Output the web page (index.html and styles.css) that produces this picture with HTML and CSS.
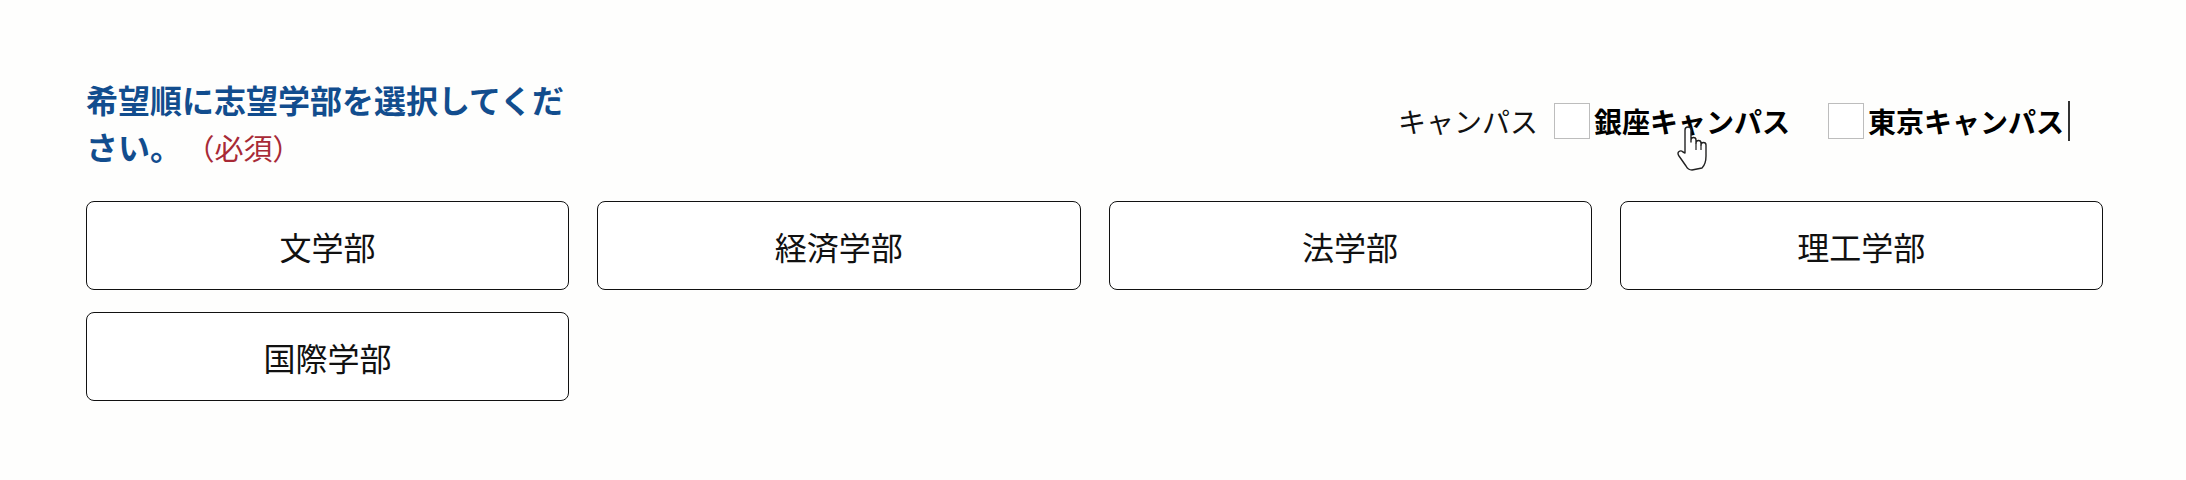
FILE: index.html
```html
<!doctype html>
<html lang="ja">

<head>
    <meta charset="UTF-8">
    <title>志望学部選択</title>

    <!-- CSS -->
    <link rel="stylesheet" href="styles.css">

</head>

<body>
    <div class="page">
        <div class="head">
            <p class="lead">希望順に志望学部を選択してください。<span class="req">（必須）</span></p>

            <div class="campus">
                <span class="campus-label">キャンパス</span>
                <label class="campus-opt">
                    <input type="checkbox" name="campus" value="ginza">
                    <span>銀座キャンパス</span>
                </label>
                <label class="campus-opt">
                    <input type="checkbox" name="campus" value="tokyo">
                    <span>東京キャンパス</span><span class="caret"></span>
                </label>
            </div>
        </div>

        <div class="faculties">
            <button class="faculty">文学部</button>
            <button class="faculty">経済学部</button>
            <button class="faculty">法学部</button>
            <button class="faculty">理工学部</button>
            <button class="faculty">国際学部</button>
        </div>

        <!-- mouse pointer over the campus option -->
        <svg class="pointer" width="36" height="48" viewBox="0 0 36 48">
            <path d="M9 28 L9 5 Q9 2 12 2 Q15 2 15 5 L15 17 L15 15 Q15 12.5 17.5 12.5 Q20 12.5 20 15 L20 18 Q20 15.5 22.5 15.5 Q25 15.5 25 18 L25 20 Q25 17.5 27.5 17.5 Q30 17.5 30 20 L30 31 Q30 39 26 43 L16 45 Q12 45 10 41 L3 31 Q1 28 3 26.5 Q5 25 7 27 Z"
                fill="#fff" stroke="#222" stroke-width="1.4" stroke-linejoin="round" />
            <path d="M20 18 L20 25 M25 20 L25 25" fill="none" stroke="#222" stroke-width="1.2" />
        </svg>
    </div>
</body>
</html>
```

FILE: styles.css
```css
body {
    margin: 0;
    background-color: #fefefd;
    font-family: "Noto Sans CJK JP", "Noto Sans", sans-serif;
    color: #111;
}

.page {
    position: relative;
    padding: 76px 83px 40px 86px;
}

.head {
    display: flex;
    align-items: center;
    justify-content: space-between;
    margin-bottom: 30px;
}

.lead {
    width: 483px;
    margin: 0;
    font-size: 32px;
    line-height: 47px;
    font-weight: 700;
    color: #124d8e;
}

.req {
    margin-left: 18px;
    font-size: 29px;
    font-weight: 400;
    color: #a82a36;
}

.campus {
    display: flex;
    align-items: center;
    margin-right: 33px;
    padding-bottom: 6px;
    font-size: 28px;
    line-height: 40px;
}

.campus-label {
    margin-right: 16px;
}

.campus-opt {
    display: flex;
    align-items: center;
    gap: 4px;
    font-weight: 700;
    color: #000;
}

.campus-opt + .campus-opt {
    margin-left: 38px;
}

.campus-opt input {
    appearance: none;
    width: 36px;
    height: 36px;
    margin: 0;
    border: 1px solid #bdbdbd;
    background-color: #fff;
}

.caret {
    width: 2px;
    height: 40px;
    background-color: #333;
}

.faculties {
    display: grid;
    grid-template-columns: repeat(4, 1fr);
    gap: 22px 28px;
}

.faculty {
    height: 89px;
    border: 1px solid #111;
    border-radius: 8px;
    background-color: #fff;
    font-family: inherit;
    font-size: 32px;
    color: #111;
}

.pointer {
    position: absolute;
    left: 1676px;
    top: 125px;
}
```
